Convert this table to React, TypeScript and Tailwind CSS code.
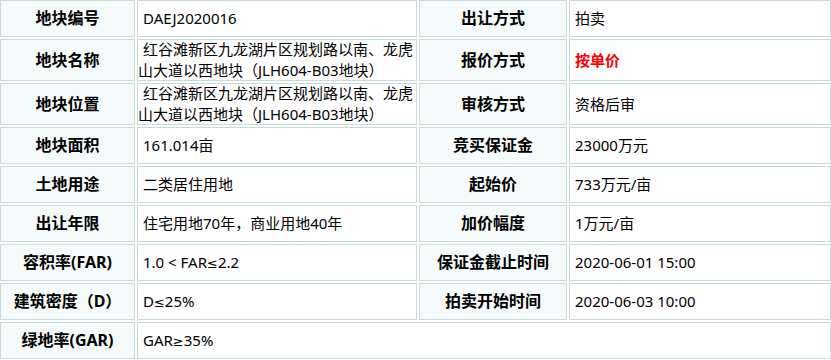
import React from "react";

type Cell = {
  text?: string;
  label?: boolean;
  red?: boolean;
  span?: number;
};

const NAME =
  "红谷滩新区九龙湖片区规划路以南、龙虎山大道以西地块（JLH604-B03地块）";

// rows of the land parcel info sheet
const rows: Cell[][] = [
  [{ text: "地块编号", label: true }, { text: "DAEJ2020016" }, { text: "出让方式", label: true }, { text: "拍卖" }],
  [{ text: "地块名称", label: true }, { text: NAME }, { text: "报价方式", label: true }, { text: "按单价", red: true }],
  [{ text: "地块位置", label: true }, { text: NAME }, { text: "审核方式", label: true }, { text: "资格后审" }],
  [{ text: "地块面积", label: true }, { text: "161.014亩" }, { text: "竞买保证金", label: true }, { text: "23000万元" }],
  [{ text: "土地用途", label: true }, { text: "二类居住用地" }, { text: "起始价", label: true }, { text: "733万元/亩" }],
  [{ text: "出让年限", label: true }, { text: "住宅用地70年，商业用地40年" }, { text: "加价幅度", label: true }, { text: "1万元/亩" }],
  [{ text: "容积率(FAR)", label: true }, { text: "1.0 < FAR≤2.2" }, { text: "保证金截止时间", label: true }, { text: "2020-06-01 15:00" }],
  [{ text: "建筑密度（D）", label: true }, { text: "D≤25%" }, { text: "拍卖开始时间", label: true }, { text: "2020-06-03 10:00" }],
  [{ text: "绿地率(GAR)", label: true }, { text: "GAR≥35%", span: 3 }],
];

// ≤ / ≥ come out full width in the CJK font, so give them a latin one
function renderText(text = "") {
  return text.split(/([≤≥])/).map((part, i) =>
    part === "≤" || part === "≥" ? (
      <span key={i} className="font-['DejaVu_Sans'] text-[13px]">
        {part}
      </span>
    ) : (
      part
    )
  );
}

function InfoCell({ cell }: { cell: Cell }) {
  if (cell.label) {
    return (
      <div className="flex items-center justify-center border border-[#c6dcd9] bg-[#f5fafa] text-[16px] font-bold leading-[21px] text-black">
        {cell.text}
      </div>
    );
  }
  return (
    <div
      className={`flex items-center border border-[#c6dcd9] bg-white pl-[0px] pr-[1px] text-[15px] leading-[21px] indent-[5px] ${
        cell.span === 3 ? "col-span-3" : ""
      } ${cell.red ? "font-bold text-[#ff0000]" : "text-black"}`}>
      <span className="block">{renderText(cell.text)}</span>
    </div>
  );
}

export default function App() {
  return (
    <div
      className="w-[831px] h-[360px] bg-white overflow-hidden"
      style={{ fontFamily: '"Noto Sans", "Noto Sans CJK SC", sans-serif' }}>
      <div className="grid grid-cols-[135px_280px_148px_262px] grid-rows-[37px_42px_42px_37px_37px_37px_37px_37px_37px] gap-[2px]">
        {rows.map((row, i) =>
          row.map((cell, j) => <InfoCell key={`${i}-${j}`} cell={cell} />)
        )}
      </div>
    </div>
  );
}
